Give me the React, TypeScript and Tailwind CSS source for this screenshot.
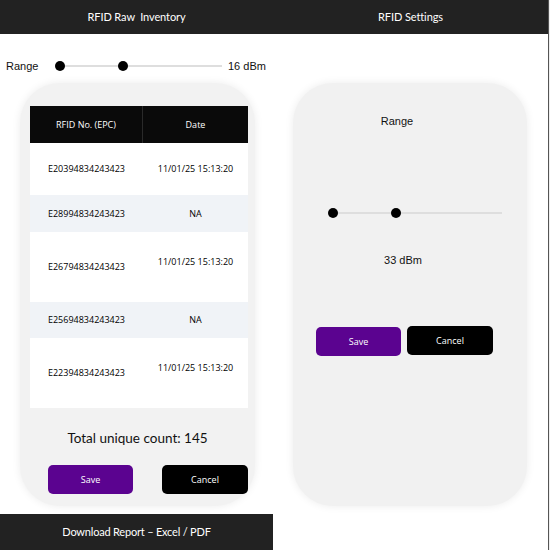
import React from "react";

const rows = [
  { epc: "E20394834243423", date: "11/01/25 15:13:20", h: "h-[52px]", bg: "bg-white", lift: false },
  { epc: "E28994834243423", date: "NA", h: "h-[37px]", bg: "bg-[#f0f3f7]", lift: false },
  { epc: "E26794834243423", date: "11/01/25 15:13:20", h: "h-[70px]", bg: "bg-white", lift: true },
  { epc: "E25694834243423", date: "NA", h: "h-[36px]", bg: "bg-[#f0f3f7]", lift: false },
  { epc: "E22394834243423", date: "11/01/25 15:13:20", h: "h-[70px]", bg: "bg-white", lift: true },
];

function Slider({ width }: { width: string }) {
  return (
    <div className={`relative h-[10px] flex items-center ${width}`}>
      <div className="h-[2px] w-full bg-[#dedede]" />
      <div className="absolute left-[-5px] top-0 w-[10px] h-[10px] rounded-full bg-black" />
      <div className="absolute left-[58px] top-0 w-[10px] h-[10px] rounded-full bg-black" />
    </div>
  );
}

export default function App() {
  const sans = { fontFamily: "'Open Sans', 'Noto Sans', sans-serif" };
  const arial = { fontFamily: "'Liberation Sans', Arial, sans-serif" };
  const lato = { fontFamily: "Lato, sans-serif" };

  return (
    <div className="w-[550px] h-[550px] flex bg-white overflow-hidden" style={sans}>
      <div className="w-[548px] h-full flex flex-col">
        {/* Top bar */}
        <div className="h-[34px] flex bg-[#222222] text-white text-[11px] tracking-[-0.1px]" style={lato}>
          <div className="w-[273px] flex items-center justify-center whitespace-pre">RFID Raw  Inventory</div>
          <div className="flex-1 flex items-center justify-center">RFID Settings</div>
        </div>

        <div className="flex flex-1">
          {/* Left column */}
          <div className="w-[273px] flex flex-col">
            <div className="h-[49px] pt-[22px] flex items-start text-[11px] text-[#111]" style={arial}>
              <div className="flex items-center h-[20px] w-full">
                <span className="ml-[6px] w-[54px]">Range</span>
                <Slider width="w-[162px]" />
                <span className="ml-[6px]">16 dBm</span>
              </div>
            </div>

            <div className="ml-[20px] w-[235px] h-[423px] rounded-[40px] bg-[#f2f2f2] shadow-[0_0_8px_rgba(0,0,0,0.08)] pt-[23px] flex flex-col">
              <div className="ml-[10px] w-[218px] text-[9px] text-black">
                <div className="flex h-[37px] bg-[#0a0a0a] text-white">
                  <div className="w-[113px] flex items-center justify-center border-r border-[#2a2a2a]">RFID No. (EPC)</div>
                  <div className="flex-1 flex items-center justify-center">Date</div>
                </div>
                {rows.map((r) => (
                  <div key={r.epc} className={`flex ${r.h} ${r.bg}`}>
                    <div className="w-[113px] flex items-center justify-center">{r.epc}</div>
                    <div className={`flex-1 flex items-center justify-center ${r.lift ? "pb-[10px]" : ""}`}>{r.date}</div>
                  </div>
                ))}
              </div>

              <div className="mt-[20px] text-center text-[13.5px] text-[#111]" style={lato}>
                Total unique count: 145
              </div>

              <div className="mt-[17px] flex gap-[29px] pl-[28px]">
                <button className="w-[85px] h-[29px] rounded-[5px] bg-[#5b0390] text-white text-[9px]">Save</button>
                <button className="w-[86px] h-[29px] rounded-[5px] bg-black text-white text-[9px]">Cancel</button>
              </div>
            </div>

            <div className="mt-auto h-[36px] bg-[#222222] text-white text-[11px] tracking-[-0.2px] flex items-center justify-center" style={lato}>
              Download Report – Excel / PDF
            </div>
          </div>

          {/* Right column */}
          <div className="flex-1 pt-[49px]">
            <div className="ml-[20px] w-[234px] h-[423px] rounded-[40px] bg-[#f1f1f1] shadow-[0_0_8px_rgba(0,0,0,0.08)] flex flex-col">
              <div className="mt-[30px] text-center text-[11px] text-[#111]" style={arial}>
                <span className="mr-[26px]">Range</span>
              </div>
              <div className="mt-[78px] ml-[40px]">
                <Slider width="w-[169px]" />
              </div>
              <div className="mt-[34px] text-center text-[11px] text-[#111]" style={arial}>
                <span className="mr-[14px]">33 dBm</span>
              </div>
              <div className="mt-[59px] flex gap-[6px] pl-[23px] items-start">
                <button className="w-[85px] h-[29px] rounded-[5px] bg-[#5b0390] text-white text-[9px]">Save</button>
                <button className="w-[86px] h-[29px] -mt-[1px] rounded-[5px] bg-black text-white text-[9px]">Cancel</button>
              </div>
            </div>
          </div>
        </div>
      </div>
      <div className="w-[1px] h-full bg-[#555]" />
      <div className="w-[1px] h-full bg-[#eee]" />
    </div>
  );
}
